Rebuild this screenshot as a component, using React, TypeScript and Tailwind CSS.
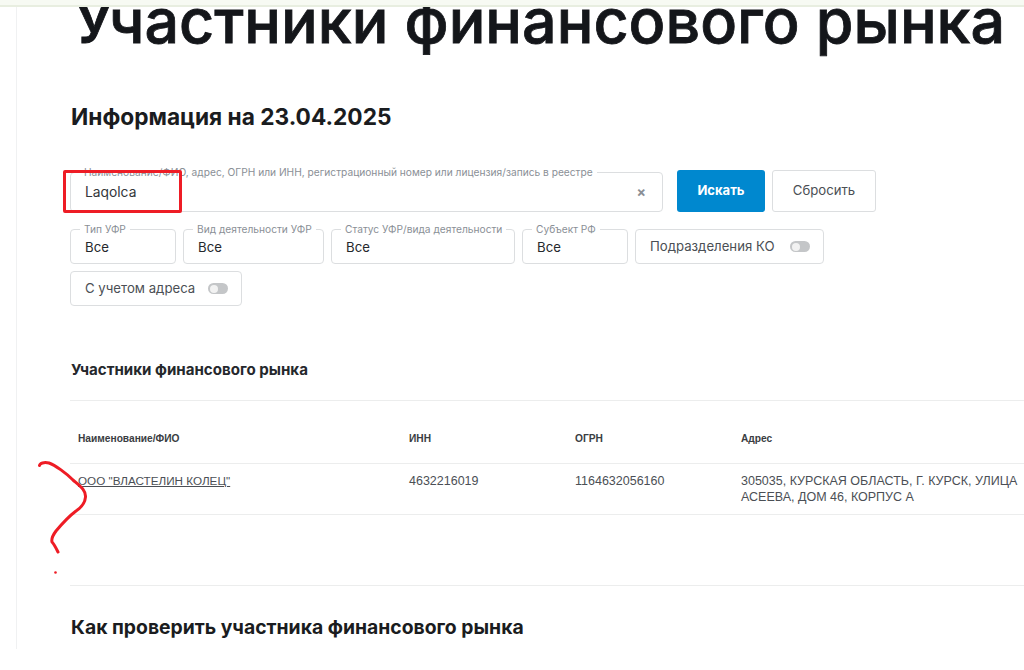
const sans = "font-['Inter','Noto_Sans',sans-serif]";
const arial = "font-['Liberation_Sans',Arial,sans-serif]";

function Field({ label, width, value = "Все" }: { label: string; width: string; value?: string }) {
  return (
    <div className={`relative h-[35px] ${width} shrink-0 rounded-[4px] border border-[#dcdee0] pl-[14px] pt-[2px] flex items-center`}>
      <span className="absolute left-[9px] top-[-7px] bg-white px-[4px] text-[10.2px] leading-[13px] text-[#8a8f96] whitespace-nowrap">{label}</span>
      <span className="text-[13.2px] text-[#25282c]">{value}</span>
    </div>
  );
}

function Toggle({ label, width }: { label: string; width: string }) {
  return (
    <div className={`h-[35px] ${width} shrink-0 rounded-[4px] border border-[#dcdee0] pl-[14px] pr-[13px] flex items-center justify-between`}>
      <span className="text-[13.2px] text-[#4b4f55] whitespace-nowrap">{label}</span>
      <span className="w-[20px] h-[11px] rounded-full bg-[#c4c6c8] flex items-center pl-[2px]">
        <span className="w-[8px] h-[8px] rounded-full bg-[#f2f2f2]" />
      </span>
    </div>
  );
}

export default function App() {
  return (
    <div className={`relative h-[670px] w-[1024px] overflow-hidden bg-white ${sans}`}>
      <div className="relative z-10 h-[7px] bg-[#f7faf3] border-b-2 border-[#e8eee0]" />
      <div className="ml-[16px] h-[663px] border-l border-[#f0f1f2] pl-[53px]">
        <h1 className="ml-[4px] mt-[-21px] text-[61px] leading-[70px] font-medium [-webkit-text-stroke:0.8px_#14161a] text-[#14161a] whitespace-nowrap">
          Участники финансового рынка
        </h1>
        <h2 className="ml-[1px] mt-[45px] text-[22.7px] leading-[32px] font-bold text-[#1a1c20]">Информация на 23.04.2025</h2>

        <div className="mt-[37px] flex items-start">
          <div className="relative h-[40px] w-[593px] mt-[2px] rounded-[4px] border border-[#dcdee0] pl-[14px] pr-[16px] flex items-center justify-between">
            <span className="absolute left-[9px] top-[-7px] bg-white px-[4px] text-[10.2px] leading-[13px] text-[#8a8f96] whitespace-nowrap">
              Наименование/ФИО, адрес, ОГРН или ИНН, регистрационный номер или лицензия/запись в реестре
            </span>
            <span className="text-[13.8px] text-[#33363b]">Laqolca</span>
            <span className="text-[14px] leading-none font-bold text-[#8a8f96]">×</span>
          </div>
          <button className="ml-[14px] h-[42px] w-[88px] rounded-[3px] bg-[#0088cf] text-[13px] font-bold text-white">Искать</button>
          <button className="ml-[7px] h-[42px] w-[104px] rounded-[3px] border border-[#dcdee0] text-[13.2px] text-[#4b4f55]">Сбросить</button>
        </div>

        <div className="mt-[17px] flex flex-wrap w-[780px] gap-x-[7px] gap-y-[7px]">
          <Field label="Тип УФР" width="w-[106px]" />
          <Field label="Вид деятельности УФР" width="w-[141px]" />
          <Field label="Статус УФР/вида деятельности" width="w-[184px]" />
          <Field label="Субъект РФ" width="w-[106px]" />
          <Toggle label="Подразделения КО" width="w-[189px]" />
          <Toggle label="С учетом адреса" width="w-[172px]" />
        </div>

        <h3 className="ml-[1px] mt-[54px] text-[15.1px] leading-[20px] font-bold text-[#25282c]">Участники финансового рынка</h3>
        <div className="mt-[20px] border-t border-[#eceded]">
          <div className={`flex h-[63px] pt-[31px] pl-[8px] text-[10.2px] leading-[14px] font-bold text-[#3a3d42] border-b border-[#eceded] ${arial}`}>
            <span className="w-[331px]">Наименование/ФИО</span>
            <span className="w-[166px]">ИНН</span>
            <span className="w-[166px]">ОГРН</span>
            <span>Адрес</span>
          </div>
          <div className={`flex h-[51px] pl-[8px] pt-[9px] text-[12.5px] leading-[16px] text-[#4b4f55] border-b border-[#eceded] ${arial}`}>
            <span className="w-[331px] text-[11.7px] underline">ООО "ВЛАСТЕЛИН КОЛЕЦ"</span>
            <span className="w-[166px]">4632216019</span>
            <span className="w-[166px]">1164632056160</span>
            <span className="w-[283px]">305035, КУРСКАЯ ОБЛАСТЬ, Г. КУРСК, УЛИЦА АСЕЕВА, ДОМ 46, КОРПУС А</span>
          </div>
        </div>
        <div className="mt-[70px] border-t border-[#eceded]">
          <h3 className="ml-[1px] mt-[28px] text-[19.35px] leading-[26px] font-bold text-[#1a1c20]">Как проверить участника финансового рынка</h3>
        </div>
      </div>

      <div className="absolute left-[63px] top-[170px] h-[43px] w-[119px] rounded-[2px] border-[3px] border-[#ee1c25]" />
      <svg className="absolute left-0 top-0 pointer-events-none" width="1024" height="670" viewBox="0 0 1024 670" fill="none">
        <path
          d="M39.5 465.5 C40 463 44 462 49 463 C55 465 66 473 73 480 C80 486 86 490 85.5 497 C85 503 82 507 76 511 C68 517 61 525 56 531 C53 535 51 538 52 542 C54 544 56 548 58 552"
          stroke="#ee1c25"
          strokeWidth="3"
          strokeLinecap="round"
          strokeLinejoin="round"
        />
        <circle cx="55.5" cy="572.5" r="1.3" fill="#ee1c25" />
      </svg>
    </div>
  );
}
